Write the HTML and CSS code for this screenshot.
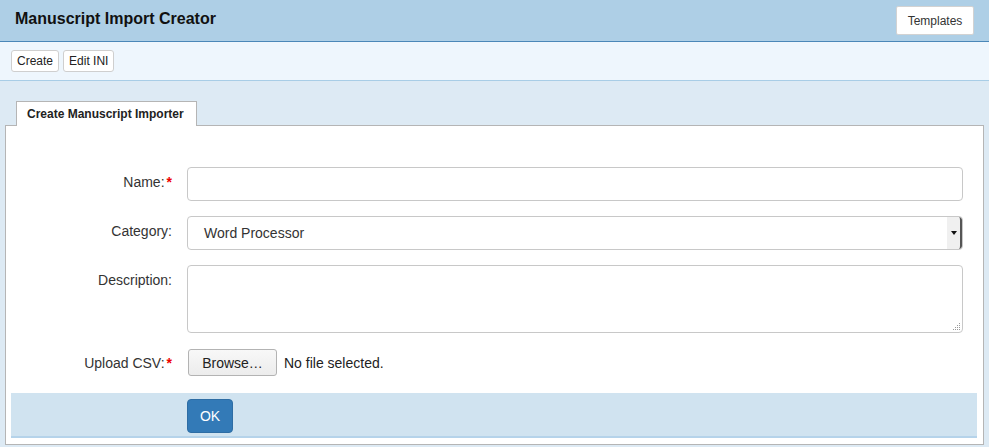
FILE: index.html
```html
<!DOCTYPE html>
<html>
<head>
<meta charset="utf-8">
<link rel="stylesheet" href="styles.css">
</head>
<body>
<div class="header">
  <div class="title">Manuscript Import Creator</div>
  <button class="tpl-btn">Templates</button>
</div>
<div class="toolbar">
  <button class="tb-btn">Create</button>
  <button class="tb-btn">Edit INI</button>
</div>
<div class="main">
  <div class="tabs"><div class="tab">Create Manuscript Importer</div></div>
  <div class="panel">
    <div class="form">
      <div class="row">
        <div class="label">Name:<span class="req">*</span></div>
        <div class="field"><div class="input"></div></div>
      </div>
      <div class="row">
        <div class="label">Category:</div>
        <div class="field">
          <div class="input select"><span class="sel-text">Word Processor</span><span class="sel-btn"><span class="arrow"></span></span></div>
        </div>
      </div>
      <div class="row">
        <div class="label">Description:</div>
        <div class="field"><div class="input textarea"><svg class="grip" width="8" height="8" viewBox="0 0 8 8"><g fill="#9a9a9a"><rect x="6" y="0" width="1" height="1"/><rect x="4" y="2" width="1" height="1"/><rect x="6" y="2" width="1" height="1"/><rect x="2" y="4" width="1" height="1"/><rect x="4" y="4" width="1" height="1"/><rect x="6" y="4" width="1" height="1"/><rect x="0" y="6" width="1" height="1"/><rect x="2" y="6" width="1" height="1"/><rect x="4" y="6" width="1" height="1"/><rect x="6" y="6" width="1" height="1"/></g></svg></div></div>
      </div>
      <div class="row upload">
        <div class="label">Upload CSV:<span class="req">*</span></div>
        <div class="field file"><button class="browse">Browse…</button><span class="nofile">No file selected.</span></div>
      </div>
    </div>
    <div class="actions">
      <div class="label"></div>
      <div class="field"><button class="ok">OK</button></div>
    </div>
  </div>
</div>
</body>
</html>
```
FILE: styles.css
```css
* { box-sizing: border-box; }
html, body { margin: 0; padding: 0; }
body {
  font-family: "Liberation Sans", Arial, sans-serif;
  color: #333;
  background: #ddeaf4;
  width: 989px;
  height: 447px;
  overflow: hidden;
}
button { font-family: inherit; margin: 0; }
.header {
  height: 42px;
  background: #aecfe6;
  border-bottom: 1px solid #4a87b8;
  display: flex;
  align-items: flex-start;
  justify-content: space-between;
  padding: 0 15px 0 15px;
}
.title {
  font-size: 16px;
  font-weight: bold;
  color: #111;
  line-height: 20px;
  margin-top: 9px;
}
.tpl-btn {
  margin-top: 6px;
  width: 78px;
  height: 29px;
  background: #fff;
  border: 1px solid #d2d2d2;
  border-radius: 2px;
  font-size: 12px;
  color: #333;
  padding: 0;
}
.toolbar {
  height: 39px;
  background: #eef6fd;
  border-bottom: 1px solid #a8cde6;
  display: flex;
  gap: 4px;
  padding: 8px 0 0 11px;
  align-items: flex-start;
}
.tb-btn {
  height: 22px;
  background: #fff;
  border: 1px solid #cfcfcf;
  border-radius: 3px;
  font-size: 12px;
  color: #222;
  padding: 0 5px;
}
.main {
  padding: 20px 5px 0 5px;
}
.tabs {
  display: flex;
  padding-left: 11px;
  height: 24px;
  position: relative;
  z-index: 1;
}
.tab {
  width: 181px;
  height: 25px;
  background: #fff;
  border: 1px solid #b5b5b5;
  border-bottom: none;
  font-size: 12px;
  font-weight: bold;
  color: #222;
  padding: 5px 0 0 10px;
  line-height: 15px;
}
.panel {
  background: #fff;
  border: 1px solid #b5b5b5;
  height: 320px;
  padding: 0 6px 5px 5px;
}
.form {
  padding-top: 41px;
  display: flex;
  flex-direction: column;
  gap: 15px;
}
.row, .actions {
  display: flex;
}
.label {
  width: 161px;
  flex: none;
  text-align: right;
  font-size: 14px;
  line-height: 20px;
  padding-top: 5px;
  color: #333;
}
.req { color: #e00; font-weight: bold; padding-left: 2px; }
.field {
  flex: 1;
  padding-left: 15px;
  padding-right: 14px;
}
.input {
  height: 34px;
  border: 1px solid #c8c8c8;
  border-radius: 4px;
  background: #fff;
}
.select {
  display: flex;
  align-items: center;
  justify-content: space-between;
  font-size: 14px;
  color: #333;
  overflow: hidden;
}
.sel-text { padding-left: 16px; }
.sel-btn {
  width: 15px;
  height: 32px;
  background: #f0f0f0;
  border-right: 2px solid #555;
  display: flex;
  align-items: center;
  justify-content: center;
  border-radius: 0 3px 3px 0;
}
.arrow {
  width: 0; height: 0;
  border-left: 3px solid transparent;
  border-right: 3px solid transparent;
  border-top: 4px solid #111;
}
.textarea {
  height: 68px;
  position: relative;
}
.grip { position: absolute; right: 1px; bottom: 1px; }
.upload { margin-top: 1px; }
.upload .label { padding-top: 4px; }
.file {
  display: flex;
  align-items: center;
  padding-left: 16px;
  height: 27px;
}
.browse {
  width: 89px;
  height: 27px;
  background: linear-gradient(#f8f8f8, #ececec);
  border: 1px solid #b3b3b3;
  border-radius: 3px;
  font-size: 14px;
  color: #222;
  padding: 0;
}
.nofile { font-size: 14px; color: #222; margin-left: 7px; }
.actions {
  margin-top: 17px;
  height: 45px;
  background: #d0e3f0;
  border-bottom: 2px solid #b5d3ea;
  padding-top: 6px;
}
.actions .label { width: 161px; }
.ok {
  width: 46px;
  height: 34px;
  background: #337ab7;
  border: 1px solid #2e6da4;
  border-radius: 4px;
  color: #fff;
  font-size: 14px;
  padding: 0;
}
```
